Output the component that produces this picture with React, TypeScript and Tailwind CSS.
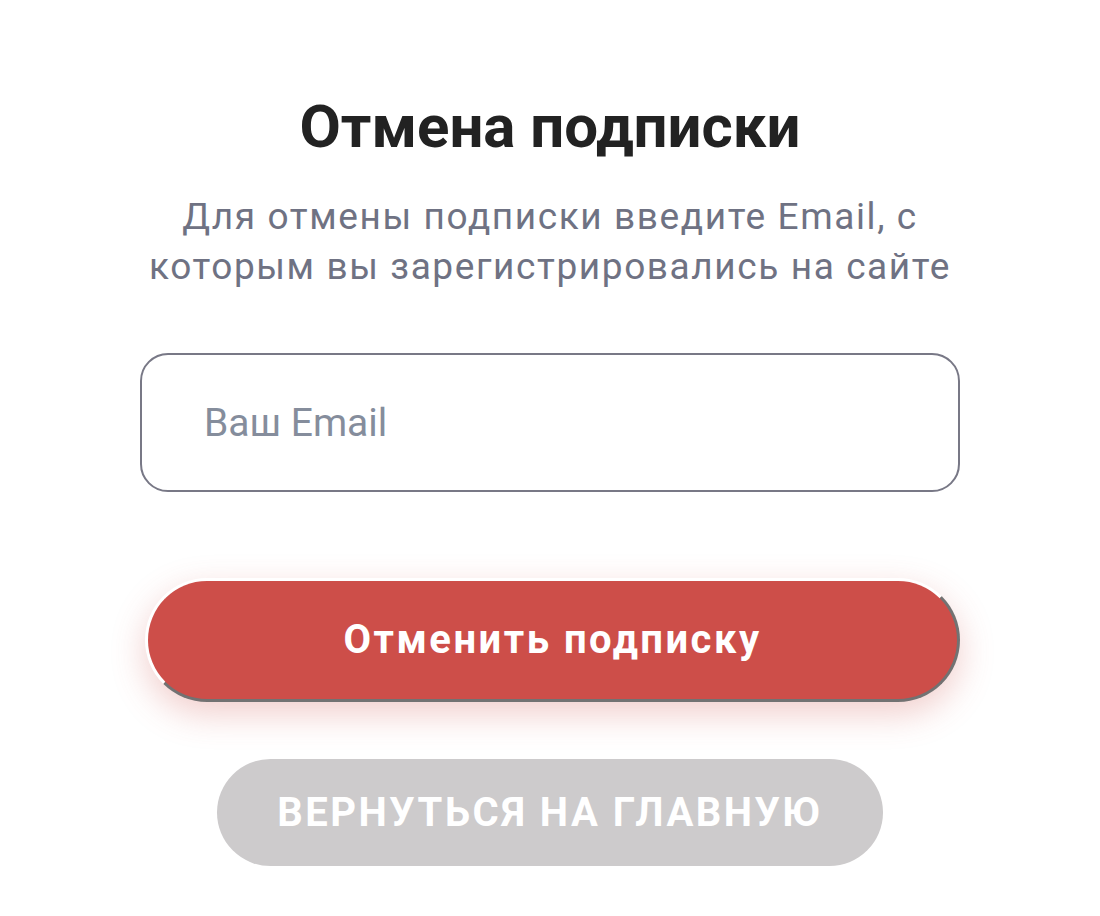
import { useState } from "react";

export default function App() {
  const [email, setEmail] = useState("");

  return (
    <div className="min-h-screen bg-white flex justify-center font-['Roboto',sans-serif]">
      <div className="w-[820px] flex flex-col items-center pt-[92px]">
        {/* Title */}
        <h1 className="text-[60px] leading-[70px] font-bold text-[#222222] text-center">
          Отмена подписки
        </h1>

        {/* Description */}
        <p className="mt-[30px] text-[37px] leading-[50px] tracking-[1.6px] text-[#6f7283] text-center">
          Для отмены подписки введите Email, с которым вы зарегистрировались на сайте
        </p>

        {/* Email */}
        <input
          type="email"
          value={email}
          onChange={(e) => setEmail(e.target.value)}
          placeholder="Ваш Email"
          className="mt-[61px] w-full h-[139px] rounded-[28px] border-2 border-[#787886] bg-white px-[62px] text-[39px] text-[#333] placeholder:text-[#858d9c] outline-none"
        />

        {/* Submit */}
        <button className="mt-[86px] self-start ml-[5px] w-[815px] h-[124px] rounded-full bg-[#cd4e49] border-[3px] border-t-white border-l-white border-r-[#727272] border-b-[#727272] shadow-[0_12px_34px_rgba(205,78,73,0.28)] text-white text-[40px] font-bold tracking-[2.5px]">
          Отменить подписку
        </button>

        {/* Back */}
        <button className="mt-[57px] w-[666px] h-[107px] rounded-full bg-[#cdcbcc] text-white text-[40px] font-bold tracking-[2.5px] uppercase">
          Вернуться на главную
        </button>
      </div>
    </div>
  );
}
